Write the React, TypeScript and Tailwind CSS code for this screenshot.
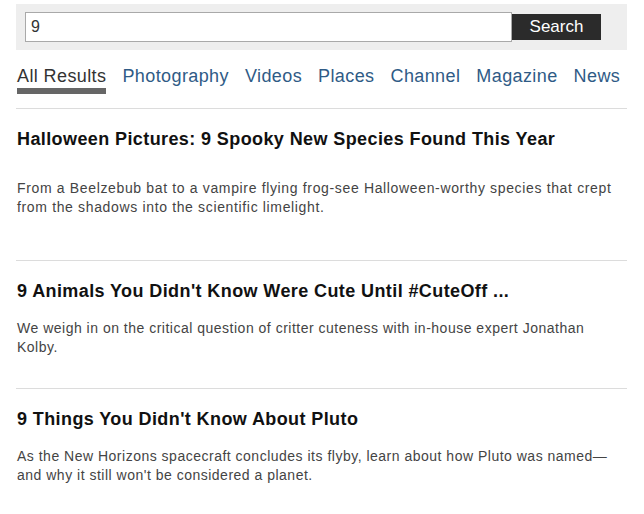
import React from "react";

const tabs = ["All Results", "Photography", "Videos", "Places", "Channel", "Magazine", "News"];

const results = [
  {
    title: "Halloween Pictures: 9 Spooky New Species Found This Year",
    desc: "From a Beelzebub bat to a vampire flying frog-see Halloween-worthy species that crept from the shadows into the scientific limelight.",
    gap: "mt-[29px]",
    pb: "pb-[43px]",
    track: "tracking-[0.65px]",
  },
  {
    title: "9 Animals You Didn't Know Were Cute Until #CuteOff ...",
    desc: "We weigh in on the critical question of critter cuteness with in-house expert Jonathan Kolby.",
    gap: "mt-[17px]",
    pb: "pb-[31px]",
    track: "tracking-[0.5px]",
  },
  {
    title: "9 Things You Didn't Know About Pluto",
    desc: "As the New Horizons spacecraft concludes its flyby, learn about how Pluto was named\u2014and why it still won't be considered a planet.",
    gap: "mt-[17px]",
    pb: "pb-[31px]",
    track: "tracking-[0.5px]",
  },
];

export default function App() {
  return (
    <div className="w-[644px] h-[514px] bg-white overflow-hidden pl-[16px] pt-[4px]" style={{ fontFamily: '"Liberation Sans", Arial, sans-serif' }}>
      <div className="w-[611px]">
        <div className="h-[46px] bg-[#eeeeee] flex items-center pl-[9px]">
          <div className="w-[487px] h-[30px] bg-white border border-[#a9a9a9] flex items-center pl-[5px] text-[16px] text-[#333]">
            9
          </div>
          <div className="w-[89px] h-[26px] bg-[#2b2b2b] text-white text-[17px] flex items-center justify-center">
            Search
          </div>
        </div>
        <div className="flex gap-[16px] pl-[1px] mt-[16px] text-[18px] leading-[20px] tracking-[0.4px]">
          {tabs.map((t, i) => (
            <div key={t} className="flex flex-col">
              <span className={i === 0 ? "text-[#333]" : "text-[#2f5b86]"}>{t}</span>
              {i === 0 ? <div className="h-[6px] bg-[#666] mt-[2px]" /> : null}
            </div>
          ))}
        </div>
        <div className="h-px bg-[#dcdcdc] mt-[14px]" />
        {results.map((r, i) => (
          <div key={i} className={i > 0 ? "border-t border-[#dcdcdc]" : ""}>
            <div className={`pt-[19px] pl-[1px] ${r.pb}`}>
              <div className="text-[18px] leading-[22px] font-bold text-[#111] tracking-[0.4px]">{r.title}</div>
              <div className={`${r.gap} ${r.track} text-[14px] leading-[19px] text-[#444] w-[608px]`}>{r.desc}</div>
            </div>
          </div>
        ))}
      </div>
    </div>
  );
}
